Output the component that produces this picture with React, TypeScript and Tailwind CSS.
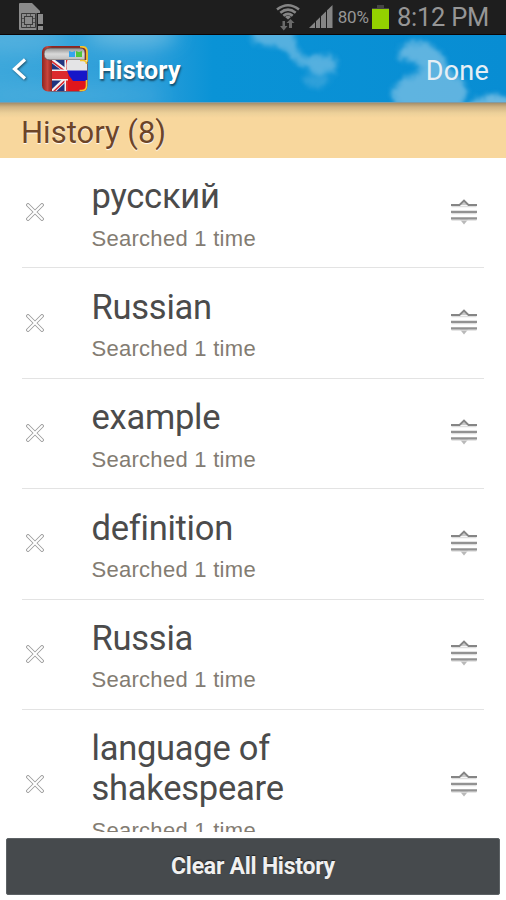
import React from "react";

interface HistoryEntry {
  term: string;
  note: string;
}

const entries: HistoryEntry[] = [
  { term: "русский", note: "Searched 1 time" },
  { term: "Russian", note: "Searched 1 time" },
  { term: "example", note: "Searched 1 time" },
  { term: "definition", note: "Searched 1 time" },
  { term: "Russia", note: "Searched 1 time" },
  { term: "language of shakespeare", note: "Searched 1 time" },
];

const SimIcon = () => (
  <svg width="26" height="30" viewBox="0 0 26 30" className="shrink-0">
    <path d="M1 2 Q1 1 2 1 H14 L22 9 V28 H2 Q1 28 1 27 Z" fill="#8b8b8b" />
    <g stroke="#3a3a3a" strokeWidth="1" fill="none">
      <path d="M3.500 11.500H17.500M3.500 25.500H17.500M3.500 11.500V25.500M17.500 11.500V25.500" />
      <rect x="6.500" y="14.500" width="8" height="8" />
      <path d="M8.500 12v2M12.500 12v2M8.500 23v2M12.500 23v2M4 16.500h2M4 20.500h2M15 16.500h2M15 20.500h2" opacity="0.7" />
    </g>
    <path d="M18.500 11h7v18h-7z" fill="#1e1e1e" />
    <path d="M20 12h5v10h-5zM20 24h5v4h-5z" fill="#8b8b8b" />
  </svg>
);

const WifiIcon = () => (
  <svg width="24" height="28" viewBox="0 0 24 28" className="shrink-0">
    <g fill="none" stroke="#858585" strokeWidth="2.6">
      <path d="M1 6.500 Q12 -2 23 6.500" />
      <path d="M4.300 9.800 Q12 3.600 19.700 9.800" />
      <path d="M7.300 12.800 Q12 8.800 16.700 12.800" />
    </g>
    <path d="M9 14 Q12 11.600 15 14 L12 16.500 Z" fill="#858585" />
    <path d="M6.500 18v5H4L7.800 27.500 11.500 23H9v-5zM13 25v-5H10.500L14.500 16l4 4H16v5z" fill="#6a6a6a" />
  </svg>
);

const SignalIcon = () => (
  <svg width="24" height="24" viewBox="0 0 24 24" className="shrink-0">
    <path d="M0 23 L23.500 0 V23 Z" fill="#858585" />
    <path d="M6.500 14v9M11.500 9v14M17.500 4v19" stroke="#1e1e1e" strokeWidth="1" />
  </svg>
);

const BatteryIcon = () => (
  <svg width="17" height="26" viewBox="0 0 17 26" className="shrink-0">
    <path d="M5 1h7v3h5v2H0V4h5z" fill="#444" />
    <rect y="5" width="17" height="20" fill="#93d100" />
  </svg>
);

const Sky = () => (
  <svg className="absolute inset-0" width="506" height="68" viewBox="0 0 506 68" preserveAspectRatio="none">
    <defs>
      <linearGradient id="sky" x1="0" x2="1">
        <stop offset="0" stopColor="#3ca7db" />
        <stop offset="0.3" stopColor="#2a9dd9" />
        <stop offset="0.42" stopColor="#0a93d6" />
        <stop offset="1" stopColor="#088dd3" />
      </linearGradient>
      <filter id="soft" x="-30%" y="-30%" width="160%" height="160%">
        <feTurbulence type="fractalNoise" baseFrequency="0.09" numOctaves="3" seed="7" result="noise" />
        <feGaussianBlur in="SourceGraphic" stdDeviation="2.6" result="blurred" />
        <feDisplacementMap in="blurred" in2="noise" scale="8" xChannelSelector="R" yChannelSelector="G" />
        <feGaussianBlur stdDeviation="1" />
      </filter>
      <filter id="haze" filterUnits="userSpaceOnUse" x="-60" y="-60" width="620" height="190">
        <feGaussianBlur stdDeviation="9" />
      </filter>
    </defs>
    <rect width="506" height="68" fill="url(#sky)" />
    <g filter="url(#haze)" fill="#7cc3e4">
      <ellipse cx="132" cy="0" rx="46" ry="13" opacity="0.65" />
      <ellipse cx="20" cy="4" rx="45" ry="14" opacity="0.35" />
      <ellipse cx="75" cy="60" rx="90" ry="9" opacity="0.25" />
    </g>
    <g filter="url(#soft)" fill="#83c3e5">
      <path d="M248 -10 L292 -10 296 12 304 22 328 20 337 26 334 38 318 39 300 30 282 13 256 9 Z" opacity="0.62" />
      <ellipse cx="317" cy="46" rx="14" ry="7" opacity="0.3" />
      <path d="M398 24 L401 12 414 6 430 10 444 20 448 34 462 46 468 56 458 76 400 76 391 58 401 46 414 40 422 30 410 26 Z" opacity="0.7" />
      <path d="M464 74 L478 63 494 60 520 62 520 84 464 84 Z" opacity="0.8" />
    </g>
    <path d="M0 67.500H506" stroke="#7f9ba5" />
  </svg>
);

const BookIcon = () => (
  <svg width="46" height="46" viewBox="0 0 46 46" className="shrink-0">
    <defs>
      <linearGradient id="cover" x1="0" x2="1">
        <stop offset="0" stopColor="#8d2621" />
        <stop offset="0.12" stopColor="#c9453d" />
        <stop offset="0.22" stopColor="#93241f" />
      </linearGradient>
      <linearGradient id="pages" x1="0" x2="0" y1="0" y2="1">
        <stop offset="0" stopColor="#8f8f8f" />
        <stop offset="0.5" stopColor="#d9d9d9" />
        <stop offset="1" stopColor="#bdbdbd" />
      </linearGradient>
      <clipPath id="front">
        <path d="M10 14H45V41q0 4-4 4H10z" />
      </clipPath>
      <clipPath id="jack">
        <path d="M10 14H26V46H10z" />
      </clipPath>
    </defs>
    <rect width="45.5" height="45.5" rx="6" fill="url(#cover)" />
    <path d="M38 .8h2q5 0 5 5v10" fill="none" stroke="#f4c329" strokeWidth="1.8" />
    <path d="M8 2H38q5 0 5 5v7H8q-6 0-6-6t6-6z" fill="url(#pages)" stroke="#5b4a48" strokeWidth="0.8" />
    <path d="M27 5l3 1 3-1v6h-6z" fill="#35a5ee" />
    <path d="M34 5l3 1 3-1v6h-6z" fill="#4fc63c" />
    <g clipPath="url(#front)">
      <path d="M10 14h35v32H10z" fill="#e0161b" />
      <g clipPath="url(#jack)">
        <path d="M10 14h16v32H10z" fill="#20347f" />
        <path d="M8 13L28 28M8 48L28 29" stroke="#f2f2f2" strokeWidth="4.500" />
        <path d="M8 14L28 29M8 49L28 30" stroke="#d8282f" strokeWidth="1.500" />
        <path d="M22.500 14H26V46H22.500z" fill="#f2f2f2" />
        <path d="M24 14H26V46H24z" fill="#dc2a2d" />
        <path d="M10 23.500h16v11H10z" fill="#f2f2f2" />
        <path d="M10 25h16v8H10z" fill="#dc2a2d" />
      </g>
      <path d="M25.500 14h20v11H25q-1.500-6 .5-11z" fill="#e4e4e6" />
      <path d="M25 24.500h20v10.500H31q-4-4-6-10.500z" fill="#1616c9" />
    </g>
    <path d="M38 14.500h3q3.500 0 3.500 3.500M44.500 34v6q0 4.500-5 4.500h-2" fill="none" stroke="#f4c329" strokeWidth="1.6" />
  </svg>
);

const RemoveIcon = () => (
  <svg width="18" height="18" viewBox="0 0 18 18">
    <path d="M2 2L16 16M16 2L2 16" stroke="#9b9b9b" strokeWidth="3.8" strokeLinecap="round" />
    <path d="M2 2L16 16M16 2L2 16" stroke="#fff" strokeWidth="2" strokeLinecap="round" />
  </svg>
);

const DragIcon = () => (
  <svg width="28" height="26" viewBox="0 0 28 26">
    <path d="M9 6L14 1.500 19 6z" fill="#c9c9c9" />
    <path d="M9.500 20L14 25.500 18.500 20z" fill="#b9b9b9" />
    <path d="M1.500 7.500H26.500M1.500 14.500H26.500M1.500 21H26.500" stroke="#dedede" strokeWidth="1.500" />
    <path d="M1 6H9.500L14 1.500 18.500 6H27" fill="none" stroke="#858585" strokeWidth="1.8" />
    <path d="M1 12.800H27M1 19.400H27" stroke="#929292" strokeWidth="2.300" />
  </svg>
);

const HistoryRow: React.FC<{ entry: HistoryEntry }> = ({ entry }) => (
  <li className="mx-[22px] flex items-center border-b border-[#e3e3e3] pt-[18.4px] pb-[13.5px]">
    <button className="mb-[6px] flex w-[69.5px] shrink-0 pl-1" aria-label="Remove">
      <RemoveIcon />
    </button>
    <div className="w-[260px]">
      <p className="text-[34.5px] leading-10 tracking-[-0.25px] text-[#4b4b4b]">{entry.term}</p>
      <p className="mt-[7.5px] font-['Liberation_Sans',sans-serif] text-[22px] leading-[30px] tracking-[0.28px] text-[#837c72]">
        {entry.note}
      </p>
    </div>
    <div className="mb-[7px] ml-auto mr-1.5">
      <DragIcon />
    </div>
  </li>
);

export default function App() {
  return (
    <div className="flex h-[900px] w-[506px] flex-col overflow-hidden bg-white font-[Roboto,sans-serif]">
      {/* Status bar */}
      <div className="flex h-[35px] shrink-0 items-center border-b border-[#0c0505] bg-[#1e1e1e] pl-[18px] pr-[17px] text-[#969696]">
        <SimIcon />
        <div className="ml-auto flex items-center">
          <WifiIcon />
          <div className="ml-[9px]">
            <SignalIcon />
          </div>
          <span className="ml-[5px] mt-0.5 text-[17px] tracking-[-0.1px]">80%</span>
          <div className="ml-[3px]">
            <BatteryIcon />
          </div>
          <span className="ml-2 text-[25.5px] leading-8 tracking-[-0.25px]">8:12 PM</span>
        </div>
      </div>

      {/* Title bar */}
      <header className="relative h-[68px] shrink-0">
        <Sky />
        <div className="relative flex h-full items-center pl-3 pr-[17px]">
          <svg width="15" height="22" viewBox="0 0 15 22" className="drop-shadow-[1px_1px_1px_rgba(0,0,0,0.5)]">
            <path d="M13 1.500L2.500 11 13 20.500" fill="none" stroke="#fff" strokeWidth="3.200" />
          </svg>
          <div className="ml-[15px]">
            <BookIcon />
          </div>
          <h1 className="ml-2.5 pt-[3px] text-[25px] font-bold tracking-[0.2px] text-white [text-shadow:1px_2px_2px_rgba(0,0,0,0.5)]">
            History
          </h1>
          <button className="ml-auto pt-1 text-[27px] tracking-[0.2px] text-[#e6eff5]">Done</button>
        </div>
      </header>

      {/* Section heading */}
      <div className="flex h-[55px] shrink-0 items-center bg-[#f8d79d] bg-[linear-gradient(#a58f6a,#d0b484_4px,#ecd099_10px,#f8d79d_15px)] pl-[21px] pt-1.5">
        <h2 className="text-[31px] text-[#6d4528] [text-shadow:0_1px_1px_#fff]">History (8)</h2>
      </div>

      <ul className="h-[674px] shrink-0 overflow-hidden">
        {entries.map((entry) => (
          <HistoryRow key={entry.term} entry={entry} />
        ))}
      </ul>

      <button className="mx-1.5 mt-1.5 h-[57px] shrink-0 rounded-[2px] border border-[#5d6265] bg-[#464a4d] pt-0.5 text-[23px] font-bold tracking-[-0.25px] text-[#f0f0f0] [text-shadow:0_-1px_1px_#222]">
        Clear All History
      </button>
    </div>
  );
}
